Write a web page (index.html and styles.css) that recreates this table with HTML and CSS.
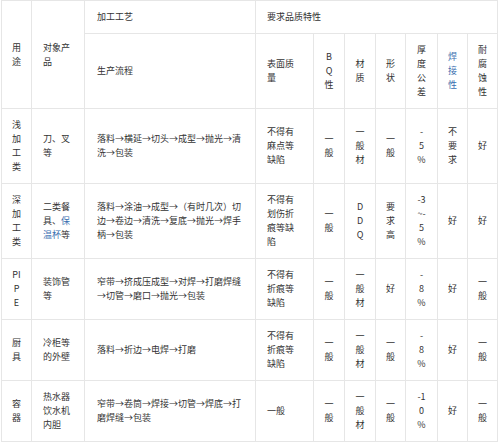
FILE: index.html
```html
<!DOCTYPE html>
<html lang="zh-CN">
<head>
<meta charset="utf-8">
<title>不锈钢加工工艺</title>
<link rel="stylesheet" href="styles.css">
</head>
<body>
<table class="spec">
  <colgroup>
    <col class="c-use">
    <col class="c-obj">
    <col class="c-flow">
    <col class="c-surf">
    <col class="c-n1">
    <col class="c-n2">
    <col class="c-n3">
    <col class="c-n4">
    <col class="c-n5">
    <col class="c-n6">
  </colgroup>
  <tbody>
    <tr class="head1">
      <td rowspan="2" class="mid">用<br>途</td>
      <td rowspan="2" class="obj">对象产品</td>
      <td class="flow">加工工艺</td>
      <td colspan="7" class="group">要求品质特性</td>
    </tr>
    <tr>
      <td class="flow">生产流程</td>
      <td class="surf">表面质量</td>
      <td class="mid">B<br>Q<br>性</td>
      <td class="mid">材<br>质</td>
      <td class="mid">形<br>状</td>
      <td class="mid">厚<br>度<br>公<br>差</td>
      <td class="mid"><a class="link" href="#">焊<br>接<br>性</a></td>
      <td class="mid">耐<br>腐<br>蚀<br>性</td>
    </tr>
    <tr>
      <td class="mid">浅<br>加<br>工<br>类</td>
      <td class="obj">刀、叉等</td>
      <td class="flow">落料→横延→切头→成型→抛光→清洗→包装</td>
      <td class="surf">不得有麻点等缺陷</td>
      <td class="mid">一<br>般</td>
      <td class="mid">一<br>般<br>材</td>
      <td class="mid">一<br>般</td>
      <td class="mid">-<br>5<br>%</td>
      <td class="mid">不<br>要<br>求</td>
      <td class="mid">好</td>
    </tr>
    <tr>
      <td class="mid">深<br>加<br>工<br>类</td>
      <td class="obj">二类餐<br>具、<a class="link" href="#">保</a><br><a class="link" href="#">温杯</a>等</td>
      <td class="flow">落料→涂油→成型→（有时几次）切边→卷边→清洗→复底→抛光→焊手柄→包装</td>
      <td class="surf">不得有划伤折痕等缺陷</td>
      <td class="mid">一<br>般</td>
      <td class="mid">D<br>D<br>Q</td>
      <td class="mid">要<br>求<br>高</td>
      <td class="mid">-3<br>~-<br>5<br>%</td>
      <td class="mid">好</td>
      <td class="mid">好</td>
    </tr>
    <tr>
      <td class="mid">PI<br>P<br>E</td>
      <td class="obj">装饰管等</td>
      <td class="flow">窄带→挤成压成型→对焊→打磨焊缝→切管→磨口→抛光→包装</td>
      <td class="surf">不得有折痕等缺陷</td>
      <td class="mid">一<br>般</td>
      <td class="mid">一<br>般<br>材</td>
      <td class="mid">好</td>
      <td class="mid">-<br>8<br>%</td>
      <td class="mid">好</td>
      <td class="mid">一<br>般</td>
    </tr>
    <tr>
      <td class="mid">厨<br>具</td>
      <td class="obj">冷柜等的外壁</td>
      <td class="flow">落料→折边→电焊→打磨</td>
      <td class="surf">不得有折痕等缺陷</td>
      <td class="mid">一<br>般</td>
      <td class="mid">一<br>般<br>材</td>
      <td class="mid">一<br>般</td>
      <td class="mid">-<br>8<br>%</td>
      <td class="mid">好</td>
      <td class="mid">一<br>般</td>
    </tr>
    <tr>
      <td class="mid">容<br>器</td>
      <td class="obj">热水器饮水机内胆</td>
      <td class="flow">窄带→卷筒→焊接→切管→焊底→打磨焊缝→包装</td>
      <td class="surf">一般</td>
      <td class="mid">一<br>般</td>
      <td class="mid">一<br>般<br>材</td>
      <td class="mid">一<br>般</td>
      <td class="mid">-1<br>0<br>%</td>
      <td class="mid">好</td>
      <td class="mid">一<br>般</td>
    </tr>
  </tbody>
</table>
</body>
</html>
```

FILE: styles.css
```css
html, body {
  margin: 0;
  padding: 0;
  background: #ffffff;
}

body {
  font-family: "Noto Sans CJK SC", "Liberation Sans", sans-serif;
  font-size: 9px;
  line-height: 14px;
  color: #333333;
}

.spec {
  margin: 0 0 0 1px;
  width: 496px;
  table-layout: fixed;
  border-collapse: collapse;
}

.c-use { width: 30px; }
.c-obj { width: 53px; }
.c-flow { width: 171px; }
.c-surf { width: 58px; }
.c-n1 { width: 31px; }
.c-n2 { width: 31px; }
.c-n3 { width: 30px; }
.c-n4 { width: 32px; }
.c-n5 { width: 30px; }
.c-n6 { width: 30px; }

.spec td {
  border: 1px solid #e6e6e6;
  padding: 9px 8px;
  vertical-align: middle;
  text-align: left;
  overflow: hidden;
}

.spec td.mid {
  text-align: center;
  padding-left: 4px;
  padding-right: 4px;
}

.spec td.obj {
  padding-left: 11px;
  padding-right: 12px;
}

.spec td.flow {
  padding-left: 12px;
  padding-right: 12px;
}

.spec td.surf {
  padding-left: 11px;
  padding-right: 12px;
}

.spec td.group {
  padding-left: 11px;
}

.link {
  color: #3a6fb0;
  text-decoration: none;
}
```
